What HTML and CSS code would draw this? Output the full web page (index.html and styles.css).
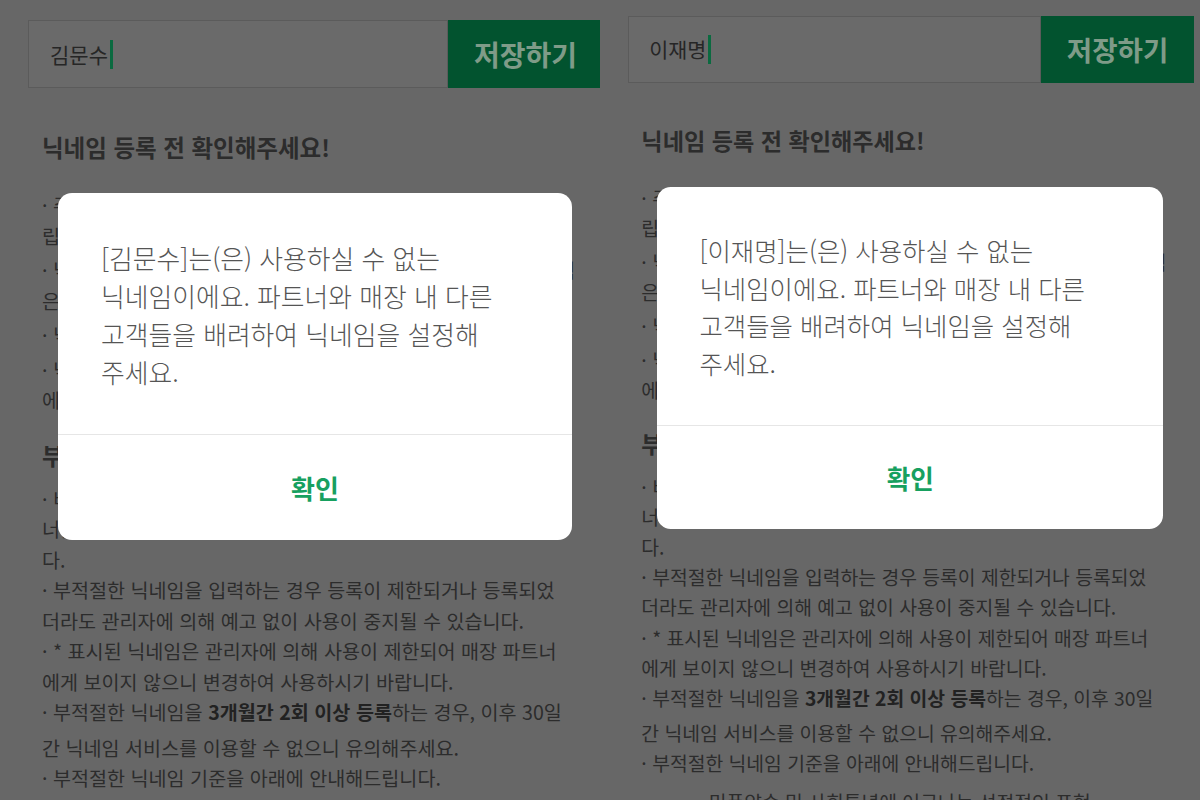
FILE: index.html
```html
<!DOCTYPE html>
<html lang="ko">
<head>
    <meta charset="UTF-8">
    <meta name="viewport" content="width=device-width, initial-scale=1.0">
    <title>닉네임 설정</title>
    <link rel="stylesheet" href="styles.css">
</head>
<body>
    <div class="screens">
        <section class="screen">
            <div class="phone">
                <div class="nick-form">
                    <div class="nick-input"><span>김문수</span><span class="caret"></span></div>
                    <button class="save-btn">저장하기</button>
                </div>

                <h2 class="notice-title">닉네임 등록 전 확인해주세요!</h2>
                <ul class="notice-list notice-list--first">
                    <li>· 주문하신 메뉴가 준비되면, 등록한 닉네임으로 파트너가 불러드<br>립니다.</li>
                    <li>· 닉네임은 한글, 영문, 숫자 조합 최대 6자까지 설정 가능하며 공백<br>은 사용하실 수 없습니다.</li>
                    <li>· 닉네임은 최초 등록 후 언제든지 변경하실 수 있습니다.</li>
                    <li>· 닉네임 미등록 시, 음료가 준비되면 주문번호로 안내되며 등록 후<br>에는 언제든지 닉네임으로 불러드립니다.</li>
                </ul>

                <h2 class="notice-title notice-title--sub">부적절한 닉네임 안내</h2>
                <ul class="notice-list">
                    <li>· 비속어 등 타인에게 불쾌감을 줄 수 있는 닉네임이나 매장 파트<br>너를 사칭하는 닉네임은 관리자에 의해 등록이 제한될 수 있습니<br>다.</li>
                    <li>· 부적절한 닉네임을 입력하는 경우 등록이 제한되거나 등록되었<br>더라도 관리자에 의해 예고 없이 사용이 중지될 수 있습니다.</li>
                    <li>· * 표시된 닉네임은 관리자에 의해 사용이 제한되어 매장 파트너<br>에게 보이지 않으니 변경하여 사용하시기 바랍니다.</li>
                    <li>· 부적절한 닉네임을 <b>3개월간 2회 이상 등록</b>하는 경우, 이후 30일<br>간 닉네임 서비스를 이용할 수 없으니 유의해주세요.</li>
                    <li>· 부적절한 닉네임 기준을 아래에 안내해드립니다.</li>
                </ul>
                <p class="notice-sub">- 미풍양속 및 사회통념에 어긋나는 선정적인 표현</p>

                <div class="dim">
                    <div class="alert">
                        <p class="alert-msg">[김문수]는(은) 사용하실 수 없는 닉네임이에요. 파트너와 매장 내 다른 고객들을 배려하여 닉네임을 설정해 주세요.</p>
                        <div class="alert-foot">
                            <button class="alert-btn">확인</button>
                        </div>
                    </div>
                </div>
            </div>
        </section>

        <section class="screen screen--b">
            <div class="phone">
                <div class="nick-form">
                    <div class="nick-input"><span>이재명</span><span class="caret"></span></div>
                    <button class="save-btn">저장하기</button>
                </div>

                <h2 class="notice-title">닉네임 등록 전 확인해주세요!</h2>
                <ul class="notice-list notice-list--first">
                    <li>· 주문하신 메뉴가 준비되면, 등록한 닉네임으로 파트너가 불러드<br>립니다.</li>
                    <li>· 닉네임은 한글, 영문, 숫자 조합 최대 6자까지 설정 가능하며 공백<br>은 사용하실 수 없습니다.</li>
                    <li>· 닉네임은 최초 등록 후 언제든지 변경하실 수 있습니다.</li>
                    <li>· 닉네임 미등록 시, 음료가 준비되면 주문번호로 안내되며 등록 후<br>에는 언제든지 닉네임으로 불러드립니다.</li>
                </ul>

                <h2 class="notice-title notice-title--sub">부적절한 닉네임 안내</h2>
                <ul class="notice-list">
                    <li>· 비속어 등 타인에게 불쾌감을 줄 수 있는 닉네임이나 매장 파트<br>너를 사칭하는 닉네임은 관리자에 의해 등록이 제한될 수 있습니<br>다.</li>
                    <li>· 부적절한 닉네임을 입력하는 경우 등록이 제한되거나 등록되었<br>더라도 관리자에 의해 예고 없이 사용이 중지될 수 있습니다.</li>
                    <li>· * 표시된 닉네임은 관리자에 의해 사용이 제한되어 매장 파트너<br>에게 보이지 않으니 변경하여 사용하시기 바랍니다.</li>
                    <li>· 부적절한 닉네임을 <b>3개월간 2회 이상 등록</b>하는 경우, 이후 30일<br>간 닉네임 서비스를 이용할 수 없으니 유의해주세요.</li>
                    <li>· 부적절한 닉네임 기준을 아래에 안내해드립니다.</li>
                </ul>
                <p class="notice-sub">- 미풍양속 및 사회통념에 어긋나는 선정적인 표현</p>

                <div class="dim">
                    <div class="alert">
                        <p class="alert-msg">[이재명]는(은) 사용하실 수 없는 닉네임이에요. 파트너와 매장 내 다른 고객들을 배려하여 닉네임을 설정해 주세요.</p>
                        <div class="alert-foot">
                            <button class="alert-btn">확인</button>
                        </div>
                    </div>
                </div>
            </div>
        </section>
    </div>
</body>
</html>
```

FILE: styles.css
```css
body {
    margin: 0;
    background: #676767;
    font-family: "Noto Sans CJK KR", "Noto Sans", sans-serif;
}

.screens {
    display: flex;
    height: 800px;
    overflow: hidden;
}

.screen {
    flex: none;
    width: 600px;
    height: 800px;
    overflow: hidden;
}

/* second capture is a touch smaller */
.screen--b {
    zoom: 0.985;
    width: 610px;
    height: 812px;
}

.phone {
    position: relative;
    width: 630px;
    height: 830px;
    padding: 20px 30px 0 42px;
    box-sizing: border-box;
    color: #2c2c2c;
}

.screen--b .phone {
    padding-top: 16px;
}

.nick-form {
    display: flex;
    height: 68px;
    margin: 0 -3px 0 -14px;
}

.nick-input {
    flex: 1;
    display: flex;
    align-items: center;
    padding-left: 21px;
    background: #6a6a6a;
    border: 1px solid #5b5b5b;
    font-size: 21px;
    color: #262626;
}

.caret {
    display: inline-block;
    width: 3px;
    height: 29px;
    margin-left: 2px;
    background: #0b6a40;
}

.save-btn {
    width: 155px;
    padding: 0;
    border: none;
    background: #02532f;
    color: #7f9b88;
    font-family: inherit;
    font-size: 28px;
    font-weight: 700;
}

.notice-title {
    margin: 44px 0 0;
    font-size: 23.5px;
    line-height: 30px;
    font-weight: 700;
}

.notice-title--sub {
    margin-top: 24px;
}

.notice-list {
    list-style: none;
    margin: 14px 0 0;
    padding: 0;
    font-size: 19.6px;
    line-height: 30.5px;
}

.notice-list--first {
    margin-top: 28px;
}

.notice-list--first li {
    margin-bottom: 4px;
}

.notice-list b {
    display: inline-block;
    margin-bottom: 5px;
    color: #222;
}

.notice-sub {
    margin: 9px 0 0;
    padding-left: 56px;
    font-size: 19.6px;
    line-height: 30.5px;
}

.dim {
    position: absolute;
    inset: 0;
    padding-top: 193px;
}

.screen--b .dim {
    padding-top: 190px;
}

.alert {
    width: 514px;
    margin: 0 auto;
    background: #fff;
    border-radius: 14px;
    overflow: hidden;
}

.alert-msg {
    margin: 0;
    padding: 46px 43px 43px;
    font-size: 25.8px;
    line-height: 38px;
    font-weight: 300;
    color: #555;
    word-break: keep-all;
}

.alert-foot {
    display: flex;
    align-items: center;
    justify-content: center;
    height: 105px;
    border-top: 1px solid #e6e6e6;
}

.alert-btn {
    padding: 0;
    border: none;
    background: none;
    color: #17a05f;
    font-family: inherit;
    font-size: 26px;
    font-weight: 700;
}
```
